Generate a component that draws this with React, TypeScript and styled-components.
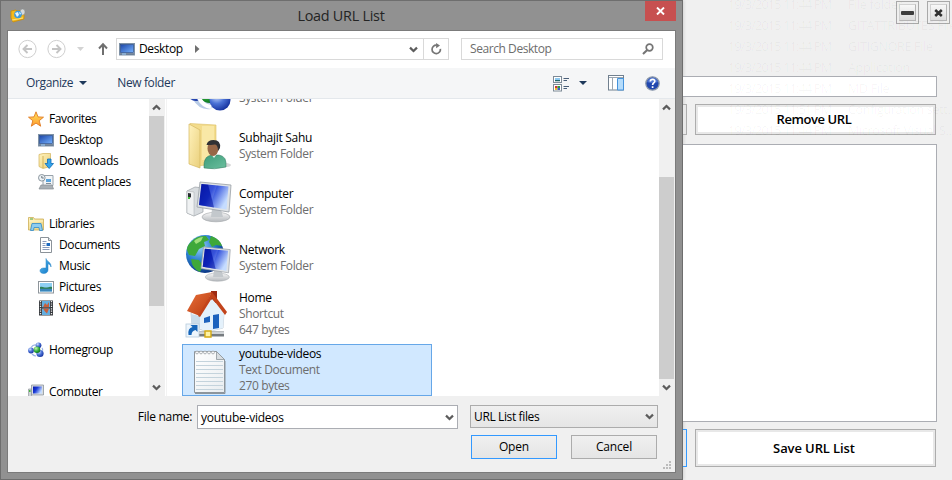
import React from "react";
import styled, { createGlobalStyle } from "styled-components";

const Global = createGlobalStyle`
  *, *::before, *::after { box-sizing: border-box; }
  html, body { margin: 0; padding: 0; overflow: hidden; }
  body { font-family: "Open Sans", "Noto Sans", sans-serif; font-size: 12px; letter-spacing: -0.37px; color: #000; }
  svg { display: block; flex: none; }
`;

/* ---------- application window behind ---------- */
const Screen = styled.div`
  position: relative;
  display: flex;
  width: 952px;
  height: 480px;
  background: #f0f0f0;
  overflow: hidden;
`;
const AppPane = styled.div`
  flex: 1;
  display: flex;
  flex-direction: column;
  min-width: 0;
  padding-right: 15px;
`;
const AppTitle = styled.div`
  display: flex;
  justify-content: flex-end;
  gap: 8px;
  height: 76px;
  padding-top: 1px;
  margin-right: -13px;
`;
const CaptionButton = styled.div`
  width: 23px;
  height: 23px;
  padding: 2px;
  border: 1px solid #a9a9a9;
  background: #efefef;
  & > div {
    display: grid;
    place-items: center;
    height: 17px;
    border: 1px solid #d2d2d2;
    border-right-color: #b5b5b5;
    border-bottom-color: #b5b5b5;
    background: linear-gradient(#f8f8f8, #dcdcdc);
  }
`;
const UrlField = styled.div`
  height: 21px;
  border: 1px solid #abadb3;
  border-left: 0;
  background: #fff;
`;
const ButtonRow = styled.div<{ $h: number; $mt: number }>`
  display: flex;
  gap: 8px;
  height: ${(p) => p.$h}px;
  margin: ${(p) => p.$mt}px 1px 0 0;
`;
const CutButton = styled.div<{ $focus?: boolean }>`
  width: 4px;
  border: 1px solid ${(p) => (p.$focus ? "#3399ff" : "#adadad")};
  border-left: 0;
  background: #e8e8e8;
`;
const WideButton = styled.div<{ $ls: number }>`
  flex: 1;
  display: grid;
  place-items: center;
  border: 1px solid #adadad;
  box-shadow: inset 0 0 0 2px #e8e8e8;
  background: #fff;
  font-size: 13px;
  font-weight: 600;
  letter-spacing: ${(p) => p.$ls}px;
  padding: 0 3px 1px 0;
`;
const UrlList = styled.div`
  height: 278px;
  margin-top: 9px;
  border: 1px solid #abadb3;
  border-left: 0;
  background: #fff;
`;
const Ghost = styled.div`
  position: absolute;
  left: 728px;
  top: -6px;
  display: grid;
  grid-template-columns: 120px 104px;
  grid-auto-rows: 21px;
  align-items: center;
  font-size: 12.5px;
  letter-spacing: -0.72px;
  line-height: 18px;
  white-space: nowrap;
  color: rgba(0, 0, 0, 0.04);
  pointer-events: none;
  & > span:nth-child(even) { letter-spacing: -0.3px; }
`;

/* ---------- dialog frame ---------- */
const Dialog = styled.div`
  display: flex;
  flex-direction: column;
  width: 683px;
  height: 480px;
  padding: 0 6px 6px 6px;
  border: 1px solid #6e6e6e;
  background: #919191;
  box-shadow: 1px 0 3px rgba(0, 0, 0, 0.12);
`;
const TitleBar = styled.div`
  display: flex;
  align-items: flex-start;
  height: 29px;
`;
const TitleIcon = styled.div`
  width: 34px;
  padding: 5px 0 0 3px;
`;
const TitleText = styled.div`
  flex: 1;
  padding: 4px 4px 0 0;
  text-align: center;
  font-size: 14.4px;
  line-height: 21px;
  letter-spacing: -0.25px;
  color: #242424;
`;
const CloseButton = styled.div`
  display: grid;
  place-items: center;
  width: 31px;
  height: 20px;
  background: #c75050;
`;
const Client = styled.div`
  flex: 1;
  display: flex;
  flex-direction: column;
  min-height: 0;
  border: 1px solid #7b7b7b;
  background: #fff;
`;
const NavBar = styled.div`
  display: flex;
  height: 37px;
  padding: 7px 0 0 10px;
  svg.back { margin-right: 10px; }
`;
const AddressBox = styled.div`
  display: flex;
  align-items: center;
  width: 333px;
  height: 22px;
  margin-left: 8px;
  border: 1px solid #d9d9d9;
  line-height: 20px;
  & > span { margin: 0 12px 1px 4px; }
`;
const AddressTail = styled.div`
  display: flex;
  align-items: center;
  gap: 5px;
  height: 20px;
  margin-left: auto;
`;
const Refresh = styled.div`
  display: grid;
  place-items: center;
  width: 25px;
  height: 20px;
  border-left: 1px solid #d9d9d9;
`;
const SearchBox = styled.div`
  display: flex;
  align-items: center;
  justify-content: space-between;
  width: 202px;
  height: 22px;
  margin-left: 12px;
  padding: 0 8px 1px 8px;
  border: 1px solid #d9d9d9;
  letter-spacing: -0.43px;
  color: #6d6d6d;
`;
const Toolbar = styled.div`
  display: flex;
  align-items: center;
  height: 31px;
  padding: 0 15px 0 18px;
  border-bottom: 1px solid #e4e8ec;
  background: #f5f6f7;
  color: #1e395b;
  & > span { padding-bottom: 1px; }
`;
const ToolText = styled.span<{ $left?: number }>`
  margin-left: ${(p) => p.$left ?? 0}px;
`;
const ToolIcons = styled.div`
  display: flex;
  align-items: center;
  margin-left: auto;
`;
const Gap = styled.i<{ $w: number }>`
  flex: none;
  width: ${(p) => p.$w}px;
`;

/* ---------- tree and file list ---------- */
const Body = styled.div`
  display: flex;
  height: 297px;
  overflow: hidden;
`;
const Tree = styled.div`
  width: 141px;
  padding-top: 9px;
`;
const TreeRow = styled.div<{ $sub?: boolean }>`
  display: flex;
  align-items: center;
  gap: 5px;
  height: 21px;
  padding-left: ${(p) => (p.$sub ? 30 : 20)}px;
  white-space: nowrap;
`;
const Scroll = styled.div`
  display: flex;
  flex-direction: column;
  align-items: flex-start;
  width: 16px;
  background: #f0f0f0;
`;
const Arrow = styled.div`
  display: grid;
  place-items: center;
  width: 15px;
  height: 17px;
`;
const Thumb = styled.div<{ $top: number; $h: number }>`
  width: 15px;
  height: ${(p) => p.$h}px;
  margin: ${(p) => p.$top}px 0 auto;
  background: #cdcdcd;
`;
const Files = styled.div`
  flex: 1;
  margin-left: 1px;
  padding-left: 15px;
  border-left: 1px solid #f3f3f3;
`;
const FileStack = styled.div`
  display: flex;
  flex-direction: column;
  gap: 4px;
  margin-top: -35px;
`;
const Tile = styled.div<{ $selected?: boolean }>`
  display: flex;
  align-items: center;
  gap: 6px;
  width: 250px;
  height: 52px;
  padding-left: 2px;
  border: 1px solid ${(p) => (p.$selected ? "#66a7e8" : "transparent")};
  background: ${(p) => (p.$selected ? "#d1e8ff" : "transparent")};
  line-height: 16px;
  & > div { white-space: nowrap; }
`;
const FileName = styled.div`
  letter-spacing: -0.28px;
`;
const Muted = styled.div`
  color: #6d6d6d;
`;

/* ---------- footer ---------- */
const Footer = styled.div`
  position: relative;
  flex: 1;
  display: flex;
  flex-direction: column;
  gap: 6px;
  padding: 9px 17px 0 0;
  background: #f0f0f0;
`;
const FooterRow = styled.div`
  display: flex;
  justify-content: flex-end;
  align-items: flex-start;
`;
const FieldLabel = styled.div`
  padding: 3px 5px 0 0;
  line-height: 17px;
  letter-spacing: -0.3px;
`;
const NameField = styled.div`
  display: flex;
  align-items: center;
  justify-content: space-between;
  width: 261px;
  height: 24px;
  margin-right: 12px;
  padding: 0 3px;
  border: 1px solid #abadb3;
  background: #fff;
  letter-spacing: -0.25px;
`;
const Filter = styled.div`
  display: flex;
  align-items: center;
  justify-content: space-between;
  width: 188px;
  height: 23px;
  padding: 0 3px 1px;
  border: 1px solid #acacac;
  background: linear-gradient(#f0f0f0, #e5e5e5);
`;
const PushButton = styled.div<{ $primary?: boolean }>`
  width: 86px;
  height: 24px;
  margin: 0 1px 0 13px;
  border: 1px solid ${(p) => (p.$primary ? "#3399ff" : "#acacac")};
  background: linear-gradient(#f0f0f0, #e5e5e5);
  line-height: 22px;
  text-align: center;
  letter-spacing: -0.15px;
`;
const Grip = styled.svg`
  position: absolute;
  right: 3px;
  bottom: 2px;
`;

/* ---------- icons ---------- */
const Chevron = ({ up }: { up?: boolean }) => (
  <svg width="9" height="7" viewBox="0 0 9 7">
    <path d={up ? "M1 5.4 4.5 2 8 5.4" : "M1 1.6 4.5 5 8 1.6"} fill="none" stroke="#5c5c5c" strokeWidth="2.2" />
  </svg>
);
const Caret = ({ color = "#1e395b" }: { color?: string }) => (
  <svg width="8" height="4" viewBox="0 0 8 4"><path d="M0 0h8L4 4z" fill={color} /></svg>
);
const Defs = () => (
  <svg width="0" height="0" viewBox="0 0 1 1">
    <defs>
      <linearGradient id="screen" x1="0" y1="0" x2="1" y2="1"><stop offset="0" stopColor="#1c46a8" /><stop offset="1" stopColor="#77b3ff" /></linearGradient>
      <linearGradient id="blue" x1="0" y1="0" x2="1" y2="0.5"><stop offset="0" stopColor="#0716a8" /><stop offset=".45" stopColor="#1a3ad6" /><stop offset="1" stopColor="#c5dcff" /></linearGradient>
      <linearGradient id="folder" x1="0" y1="0" x2="1" y2="1"><stop offset="0" stopColor="#fff2bc" /><stop offset="1" stopColor="#ead07c" /></linearGradient>
      <linearGradient id="star" x1="0" y1="0" x2="0" y2="1"><stop offset="0" stopColor="#ffe45c" /><stop offset="1" stopColor="#ff9a2e" /></linearGradient>
      <linearGradient id="note" x1="0" y1="0" x2="1" y2="1"><stop offset="0" stopColor="#63c1f2" /><stop offset="1" stopColor="#0a72c4" /></linearGradient>
      <linearGradient id="paper" x1="0" y1="0" x2="1" y2="1"><stop offset="0" stopColor="#fff" /><stop offset="1" stopColor="#e9edf0" /></linearGradient>
      <radialGradient id="globe" cx=".35" cy=".3" r=".75"><stop offset="0" stopColor="#9fd4fb" /><stop offset=".5" stopColor="#2a7fd0" /><stop offset="1" stopColor="#08307e" /></radialGradient>
      <radialGradient id="ball" cx=".35" cy=".3" r=".75"><stop offset="0" stopColor="#d3e2ff" /><stop offset=".5" stopColor="#4b72d6" /><stop offset="1" stopColor="#14309c" /></radialGradient>
      <radialGradient id="green" cx=".35" cy=".3" r=".75"><stop offset="0" stopColor="#c2f5b0" /><stop offset=".6" stopColor="#2fae3a" /><stop offset="1" stopColor="#0a6d1e" /></radialGradient>
      <linearGradient id="shirt" x1="0" y1="0" x2="1" y2="1"><stop offset="0" stopColor="#3d9c7a" /><stop offset="1" stopColor="#6cbf9e" /></linearGradient>
      <linearGradient id="roof" x1="0" y1="0" x2="1" y2="1"><stop offset="0" stopColor="#e8703a" /><stop offset="1" stopColor="#b8390f" /></linearGradient>
      <linearGradient id="silver" x1="0" y1="0" x2="0" y2="1"><stop offset="0" stopColor="#f8f8f8" /><stop offset="1" stopColor="#b5b9bd" /></linearGradient>
    </defs>
  </svg>
);
const DesktopIcon = () => (
  <svg width="16" height="16" viewBox="0 0 16 16">
    <rect x=".5" y="2.5" width="15" height="11.5" fill="#a4b3c4" stroke="#7f92a7" />
    <rect x="1.5" y="3.5" width="13" height="8" fill="url(#screen)" stroke="#234684" strokeWidth=".6" />
    <path d="M1 13h14" stroke="#4c5f78" /><path d="M3 13h4" stroke="#9fd0ff" />
  </svg>
);
const StarIcon = () => (
  <svg width="16" height="16" viewBox="0 0 16 16">
    <path d="M8 .8l2 5.1 5.5.3-4.3 3.5 1.5 5.5L8 12.1l-4.7 3.1 1.500-5.500L.5 6.200 6 5.900z" fill="url(#star)" stroke="#e07a22" strokeWidth=".9" />
  </svg>
);
const DownloadsIcon = () => (
  <svg width="16" height="16" viewBox="0 0 16 16">
    <path d="M1 1.5 5 .5h7.5v13L5 15.5 1 13.5z" fill="url(#folder)" stroke="#d2b25a" strokeWidth=".7" />
    <path d="M5 3v12" stroke="#caa646" strokeWidth=".8" />
    <path d="M9.5 6H13v4.500h2.500L11.200 15.500 7 10.500h2.500z" fill="#33a4ec" stroke="#0f6cb6" strokeWidth=".8" />
  </svg>
);
const RecentIcon = () => (
  <svg width="16" height="16" viewBox="0 0 16 16">
    <path d="M5 1.500h10v10H5z" fill="#f2f5f7" stroke="#98a2aa" />
    <path d="M8 5h5v3H8z" fill="#5ba4dc" /><path d="M8 9.500h5" stroke="#7f8d98" />
    <path d="M3 11h11l1.500 4H1z" fill="#a9b0b5" stroke="#868d92" strokeWidth=".7" />
    <circle cx="3.800" cy="3.800" r="3.300" fill="#eef3f6" stroke="#8c979f" /><path d="M3.800 2v2h2" fill="none" stroke="#4b5a66" strokeWidth=".8" />
  </svg>
);
const LibrariesIcon = () => (
  <svg width="16" height="16" viewBox="0 0 16 16">
    <path d="M.5 14V1.500h5l1 1.500h9v11z" fill="url(#folder)" stroke="#cdae57" strokeWidth=".8" />
    <path d="M1 5h14" stroke="#fff5c8" /><path d="M2 3h3" stroke="#4da84e" />
    <path d="M2.500 14.500 4 7.500h9l1.500 7h-3l-.5-3H6l-.5 3z" fill="#8fcdf0" stroke="#4192c8" strokeWidth=".9" />
  </svg>
);
const DocumentsIcon = () => (
  <svg width="16" height="16" viewBox="0 0 16 16">
    <path d="M2.500.5h8l3 3v12h-11z" fill="#fff" stroke="#8b9299" /><path d="M10.500.5v3h3" fill="#dde3e8" stroke="#8b9299" />
    <path d="M4.500 4.500h4M4.500 6.500h3M4.500 8.500h3M4.500 10.500h7M4.500 12.500h7" stroke="#8a9bbb" /><path d="M8.500 6H12v3H8.500z" fill="#1e6ac0" />
  </svg>
);
const MusicIcon = () => (
  <svg width="16" height="16" viewBox="0 0 16 16">
    <path d="M8 .5c.5 3 5.500 3.500 5 8.500-.5-2-1.500-2.800-3-3.200v6.200c0 2-1.800 3.500-4.200 3.500S2 14.300 2 12.700s1.700-2.700 3.700-2.700H8z" fill="url(#note)" stroke="#2484c6" strokeWidth=".5" />
  </svg>
);
const PicturesIcon = () => (
  <svg width="16" height="16" viewBox="0 0 16 16">
    <rect x=".5" y="2.500" width="15" height="11.500" fill="#fff" stroke="#8e959b" /><path d="M2 4h12v8.500H2z" fill="#8fd0f4" />
    <path d="M2 8c3-1 4 1 7 .5S12 7.500 14 8v2H2z" fill="#2f8157" /><path d="M2 9.800h12v2.700H2z" fill="#3a86bb" />
  </svg>
);
const VideosIcon = () => (
  <svg width="16" height="16" viewBox="0 0 16 16">
    <path d="M1 .5h14v15H1z" fill="#36393d" /><path d="M4 1h8v6.300H4zM4 8.500h8V15H4z" fill="#64aee0" />
    <path d="M5 7.300 7 3l2 2 2-3v5.300zM5 8.500h6l-2 5-2-2z" fill="#c8603c" />
    <path d="M2.500 1v14M13.500 1v14" stroke="#eee" strokeWidth="1.300" strokeDasharray="1.200 1.200" />
  </svg>
);
const HomegroupIcon = () => (
  <svg width="16" height="16" viewBox="0 0 16 16">
    <circle cx="3" cy="8.500" r="2.900" fill="url(#ball)" /><circle cx="10.500" cy="3.300" r="2.900" fill="url(#ball)" /><circle cx="12" cy="11.500" r="3.600" fill="url(#ball)" />
    <path d="M3 5.500Q5 2.500 8 3M14 6q1 1 .5 3M4 12q2 2 4 2" fill="none" stroke="#9bb4e4" strokeWidth="1.200" />
    <circle cx="9" cy="7.700" r="3.300" fill="url(#green)" />
  </svg>
);
const ComputerSmall = () => (
  <svg width="16" height="16" viewBox="0 0 16 16">
    <path d="M.5 5h3v9h-3z" fill="#cdd2d6" stroke="#93999e" strokeWidth=".7" /><path d="M1 6h1.500v2H1z" fill="#46b83f" />
    <path d="M3.500 1h12v10h-12z" fill="#d9dde1" stroke="#8d959c" strokeWidth=".8" /><path d="M5 2.500h9v7H5z" fill="url(#blue)" /><path d="M7 12h6v3H7z" fill="#bfc4c9" />
  </svg>
);
const HomegroupBig = () => (
  <svg width="48" height="48" viewBox="0 0 48 48">
    <path d="M6 30q7 15 20 13l2-6q-10-1-13-11z" fill="#b8cbe6" /><circle cx="11" cy="26" r="9" fill="url(#ball)" />
    <circle cx="25" cy="24" r="13" fill="url(#green)" /><circle cx="35" cy="34" r="10.500" fill="url(#ball)" />
    <path d="M14 32q4 8 12 9" fill="none" stroke="#fff" strokeWidth="4" />
  </svg>
);
const UserFolder = () => (
  <svg width="48" height="48" viewBox="0 0 48 48">
    <ellipse cx="32" cy="43" rx="14" ry="3" fill="#000" opacity=".16" />
    <path d="M5 1.500 31 3v38l-17 3z" fill="#f3dc8c" stroke="#dcbf66" strokeWidth=".6" />
    <path d="M17 4h12v34H17z" fill="#f9e8a6" />
    <path d="M4 2 15 8v38L4 42z" fill="url(#folder)" stroke="#d6b860" strokeWidth=".7" />
    <path d="M19 46q-1-12 8-13h7q8 1 7 12-12 3-22 1z" fill="url(#shirt)" stroke="#2c765b" strokeWidth=".5" />
    <path d="M26 32l3 4 3-4z" fill="#e9f5ef" />
    <ellipse cx="28" cy="26.500" rx="5.500" ry="7.500" fill="#976747" />
    <path d="M21.500 23q1-5 7-5 7.500 0 6.500 8l-2 3q0-6-3-6.500-4 .5-8.500.5z" fill="#303134" />
  </svg>
);
const Monitor = ({ x, y, s = 1 }: { x: number; y: number; s?: number }) => (
  <g transform={`translate(${x} ${y}) scale(${s})`}>
    <ellipse cx="19" cy="35" rx="14" ry="4.800" fill="url(#silver)" stroke="#a2a6aa" strokeWidth=".6" />
    <path d="M15 27h9l2 8H14z" fill="#c3c8cc" />
    <path d="M3 0l31 3-2 27L0 25z" fill="#dfe3e6" stroke="#989ea4" strokeWidth=".8" />
    <path d="M4.500 2l27 2.500-2 23L2 23z" fill="url(#blue)" /><path d="M4.500 2l7 .7L17 25.500 2 23z" fill="#0614a0" opacity=".55" />
    <path d="M11 2.700l9 .8L15 18z" fill="#fff" opacity=".13" />
  </g>
);
const ComputerBig = () => (
  <svg width="48" height="48" viewBox="0 0 48 48">
    <path d="M2 13 10 9l8 1v24L9 38l-7-3z" fill="#d8dcdf" stroke="#9ba1a6" strokeWidth=".7" />
    <path d="M2 13l7 1v24l-7-3z" fill="#f0f2f3" stroke="#a4a9ad" strokeWidth=".5" /><path d="M3 15l3 .5v4L3 19z" fill="#2b2f33" /><path d="M3 19h2v2H3z" fill="#3fc436" />
    <Monitor x={12} y={4} />
  </svg>
);
const NetworkBig = () => (
  <svg width="48" height="48" viewBox="0 0 48 48">
    <circle cx="20" cy="20" r="19" fill="url(#globe)" />
    <path d="M6 8Q12 1 21 2l3 4-5 2 1 4-6 3-4 7-6-1-2-5q0-5 4-8zM26 2q9 3 11 10l-6-1-4 2-3-5zM6 25l8 1 4 6-3 6q-8-3-9-13z" fill="#3ea83a" />
    <path d="M9 7q5-4 9-4l-2 4-5 3z" fill="#b6ec8c" opacity=".8" />
    <Monitor x={16} y={13} s={0.86} />
  </svg>
);
const HomeBig = () => (
  <svg width="48" height="48" viewBox="0 0 48 48">
    <path d="M26 1h6v12h-6z" fill="#9d2b13" />
    <path d="M6 23 14 20 24 8l15 14-1 16-16 4L7 36z" fill="#f5f9fc" stroke="#a8b7c4" strokeWidth=".6" />
    <path d="M15 26 27 9l12 13-1 16-16 4-7-4z" fill="#e4f1fb" /><path d="M6 24l9 2v12l-8-2z" fill="#c9dbe9" />
    <path d="M2 21 11 5l16-3L15 26z" fill="url(#roof)" /><path d="M27 2l15 20-2 3L27 8 15 27l-2-1z" fill="#c2441c" />
    <path d="M19 28l6-2v6l-6 1zM28 25l6-1v14l-6 1z" fill="#1c62bd" />
    <path d="M14 44h25" stroke="#777c80" strokeWidth="5" /><path d="M14 43h25" stroke="#cfd3d6" strokeWidth="2" />
    <path d="M20 41h6v6h-6z" fill="#fff3a4" stroke="#d4a915" strokeWidth="1.400" />
    <rect x="1" y="34" width="13" height="13" fill="#edf5fc" stroke="#b7cbdc" strokeWidth=".8" />
    <path d="M3.500 45q-1-7 4-8l-2-2h7v7l-2-2q-4 1-4 5z" fill="#1665b9" />
  </svg>
);
const NotepadBig = () => (
  <svg width="48" height="48" viewBox="0 0 48 48">
    <path d="M9.500 5.500h22l8 8v33h-30z" fill="url(#paper)" stroke="#8e959b" />
    <path d="M10 47.500h30V15" fill="none" stroke="#8d959b" /><path d="M31.500 5.500l8 8h-8z" fill="#d8dde1" stroke="#8e959b" strokeWidth=".8" />
    <path d="M11 15.500h27M11 19.500h27M11 23.500h27M11 27.500h27M11 31.500h27M11 35.500h27M11 39.500h27M11 43.500h27" stroke="#c4d3dc" />
    {[12, 16, 20, 24, 28].map((x) => <circle key={x} cx={x} cy="6.500" r="1.400" fill="#fff" stroke="#9aa0a5" strokeWidth=".8" />)}
  </svg>
);
const RoundArrow = ({ back }: { back?: boolean }) => (
  <svg className={back ? "back" : undefined} width="19" height="22" viewBox="0 0 19 22">
    <circle cx="9.500" cy="11" r="8.600" fill="#fff" stroke="#cfcfcf" />
    <path d={back ? "M14 11H6M9.500 7 5.500 11l4 4" : "M5 11h8M9.500 7l4 4-4 4"} fill="none" stroke="#c4c4c4" strokeWidth="1.900" />
  </svg>
);
const AppIcon = () => (
  <svg width="16" height="17" viewBox="0 0 16 17">
    <path d="M1 5l5-1 1 1 7-1v9L3 16 1 12z" fill="#f4b91d" stroke="#c98d0a" strokeWidth=".8" /><path d="M2 14l11-2" stroke="#ffe27a" />
    <ellipse cx="12.500" cy="6" rx="2.500" ry="3" fill="#d5d9dc" stroke="#858a8f" strokeWidth=".5" />
    <circle cx="8" cy="8.500" r="3.800" fill="#3f9adb" /><path d="M5 7l3-1 1 3-2 2zM9 6l2 1-1 2z" fill="#e6f6ff" />
  </svg>
);

type Leaf = { name: string; icon?: React.ReactNode; sub?: boolean };
const tree: Leaf[] = [
  { name: "Favorites", icon: <StarIcon /> },
  { name: "Desktop", icon: <DesktopIcon />, sub: true },
  { name: "Downloads", icon: <DownloadsIcon />, sub: true },
  { name: "Recent places", icon: <RecentIcon />, sub: true },
  { name: "" },
  { name: "Libraries", icon: <LibrariesIcon /> },
  { name: "Documents", icon: <DocumentsIcon />, sub: true },
  { name: "Music", icon: <MusicIcon />, sub: true },
  { name: "Pictures", icon: <PicturesIcon />, sub: true },
  { name: "Videos", icon: <VideosIcon />, sub: true },
  { name: "" },
  { name: "Homegroup", icon: <HomegroupIcon /> },
  { name: "" },
  { name: "Computer", icon: <ComputerSmall /> },
];
const files = [
  { name: "Homegroup", lines: ["System Folder"], icon: <HomegroupBig /> },
  { name: "Subhajit Sahu", lines: ["System Folder"], icon: <UserFolder /> },
  { name: "Computer", lines: ["System Folder"], icon: <ComputerBig /> },
  { name: "Network", lines: ["System Folder"], icon: <NetworkBig /> },
  { name: "Home", lines: ["Shortcut", "647 bytes"], icon: <HomeBig /> },
  { name: "youtube-videos", lines: ["Text Document", "270 bytes"], icon: <NotepadBig />, selected: true },
];
const ghostRows = [
  ["19/3/2015 11:44 PM", "File folder"],
  ["19/3/2015 11:44 PM", "GITATTRIBUTES File"],
  ["19/3/2015 11:44 PM", "GITIGNORE File"],
  ["19/3/2015 11:44 PM", "Application"],
  ["19/3/2015 11:44 PM", "MD File"],
  ["19/3/2015 11:51 PM", "Configuration sett..."],
  ["19/3/2015 11:44 PM", "Microsoft Visual S..."],
];

export default function App() {
  return (
    <Screen>
      <Global />
      <Dialog>
        <TitleBar>
          <TitleIcon><AppIcon /></TitleIcon>
          <TitleText>Load URL List</TitleText>
          <CloseButton>
            <svg width="9" height="8" viewBox="0 0 9 8"><path d="M1 .5l7 7M8 .5l-7 7" stroke="#fff" strokeWidth="1.900" /></svg>
          </CloseButton>
        </TitleBar>
        <Client>
          <NavBar>
            <RoundArrow back />
            <RoundArrow />
            <svg width="42" height="22" viewBox="0 0 42 22">
              <path d="M11 9h7l-3.500 4z" fill="#d3d3d3" />
              <path d="M37 17V7M33 10.500 37 6.300l4 4.200" fill="none" stroke="#6f6f6f" strokeWidth="2" />
            </svg>
            <AddressBox>
              <Gap $w={2} />
              <DesktopIcon />
              <span>Desktop</span>
              <svg width="5" height="8" viewBox="0 0 5 8"><path d="M0 0l4.500 4L0 8z" fill="#6f6f6f" /></svg>
              <AddressTail>
                <Chevron />
                <Refresh>
                  <svg width="12" height="12" viewBox="0 0 12 12">
                    <path d="M6.500 2.200a4.200 4.200 0 1 0 3.900 3.600" fill="none" stroke="#757575" strokeWidth="1.700" />
                    <path d="M6 0l4 2.400L6.200 5.200z" fill="#757575" />
                  </svg>
                </Refresh>
              </AddressTail>
            </AddressBox>
            <SearchBox>
              Search Desktop
              <svg width="12" height="12" viewBox="0 0 12 12">
                <circle cx="7.500" cy="4.500" r="3.300" fill="none" stroke="#757575" strokeWidth="1.700" />
                <path d="M5.200 7 1 11" stroke="#757575" strokeWidth="2.100" />
              </svg>
            </SearchBox>
          </NavBar>
          <Toolbar>
            <ToolText>Organize</ToolText>
            <Gap $w={6} />
            <Caret />
            <ToolText $left={30}>New folder</ToolText>
            <ToolIcons>
              <svg width="17" height="17" viewBox="0 0 17 17">
                <rect x=".5" y="1.500" width="8" height="6" fill="#fff" stroke="#7d8a96" /><path d="M2 3h5v2H2z" fill="#8ec9ef" /><path d="M2 5h5v1.300H2z" fill="#23666b" />
                <rect x=".5" y="9.500" width="8" height="6.500" fill="#fff" stroke="#7d8a96" />
                <path d="M2 11h2.500v2H2z" fill="#d03535" /><path d="M4.500 11H7v2H4.500z" fill="#2f9b3b" /><path d="M2 13h2.500v2H2z" fill="#e9be25" /><path d="M4.500 13H7v2H4.500z" fill="#3d5ed0" />
                <path d="M10.500 3.500H16M10.500 5.500H14M10.500 11.500H16M10.500 13.500H14" stroke="#4a5f78" />
              </svg>
              <Gap $w={9} />
              <Caret />
              <Gap $w={21} />
              <svg width="16" height="16" viewBox="0 0 16 16">
                <rect x=".5" y=".5" width="15" height="14.500" fill="#fff" stroke="#71808f" /><path d="M1 2.500h14" stroke="#9ba6b0" /><path d="M4.500 3v12" stroke="#9ba6b0" />
                <path d="M9.500 3.500h6V15h-6z" fill="#b5dcfb" stroke="#4593dc" />
              </svg>
              <Gap $w={21} />
              <svg width="15" height="15" viewBox="0 0 15 15">
                <circle cx="7.500" cy="7.500" r="6.700" fill="#2147ae" stroke="#8d99aa" strokeWidth="1.300" /><path d="M2 6q5 2 11 0-1-4-5.500-4.200Q3 2 2 6z" fill="#6388de" opacity=".7" />
                <path d="M5.300 5.500c.2-2.800 4.700-2.600 4.500-.2C9.700 6.800 7.600 7 7.600 8.900M7.600 10.300v1.600" fill="none" stroke="#fff" strokeWidth="1.700" />
              </svg>
            </ToolIcons>
          </Toolbar>
          <Body>
            <Tree>
              {tree.map((n, i) => <TreeRow key={i} $sub={n.sub}>{n.icon}<span>{n.name}</span></TreeRow>)}
            </Tree>
            <Scroll>
              <Arrow><Chevron up /></Arrow>
              <Thumb $top={0} $h={190} />
              <Arrow><Chevron /></Arrow>
            </Scroll>
            <Files>
              <FileStack>
                {files.map((f) => (
                  <Tile key={f.name} $selected={f.selected}>
                    {f.icon}
                    <div>
                      <FileName>{f.name}</FileName>
                      {f.lines.map((l) => <Muted key={l}>{l}</Muted>)}
                    </div>
                  </Tile>
                ))}
              </FileStack>
            </Files>
            <Scroll>
              <Arrow><Chevron up /></Arrow>
              <Thumb $top={61} $h={202} />
              <Arrow><Chevron /></Arrow>
            </Scroll>
          </Body>
          <Footer>
            <FooterRow>
              <FieldLabel>File name:</FieldLabel>
              <NameField>youtube-videos<Chevron /></NameField>
              <Filter>URL List files<Chevron /></Filter>
            </FooterRow>
            <FooterRow>
              <PushButton $primary>Open</PushButton>
              <PushButton>Cancel</PushButton>
            </FooterRow>
            <Grip width="9" height="9" viewBox="0 0 9 9">
              <path d="M6 0h2v2H6zM3 3h2v2H3zM6 3h2v2H6zM0 6h2v2H0zM3 6h2v2H3zM6 6h2v2H6z" fill="#bcbcbc" />
            </Grip>
          </Footer>
        </Client>
      </Dialog>
      <AppPane>
        <AppTitle>
          <CaptionButton><div><svg width="13" height="4" viewBox="0 0 13 4"><rect width="13" height="4" rx="1" fill="#3e3e3e" /></svg></div></CaptionButton>
          <CaptionButton><div><svg width="9" height="8" viewBox="0 0 9 8"><path d="M1.200 1l6.600 6M7.800 1 1.200 7" stroke="#2f2f2f" strokeWidth="2.500" /></svg></div></CaptionButton>
        </AppTitle>
        <UrlField />
        <ButtonRow $h={31} $mt={7}><CutButton /><WideButton $ls={-0.42}>Remove URL</WideButton></ButtonRow>
        <UrlList />
        <ButtonRow $h={38} $mt={7}><CutButton $focus /><WideButton $ls={-0.1}>Save URL List</WideButton></ButtonRow>
      </AppPane>
      <Ghost>
        {ghostRows.map(([d, t]) => <React.Fragment key={t}><span>{d}</span><span>{t}</span></React.Fragment>)}
      </Ghost>
      <Defs />
    </Screen>
  );
}
